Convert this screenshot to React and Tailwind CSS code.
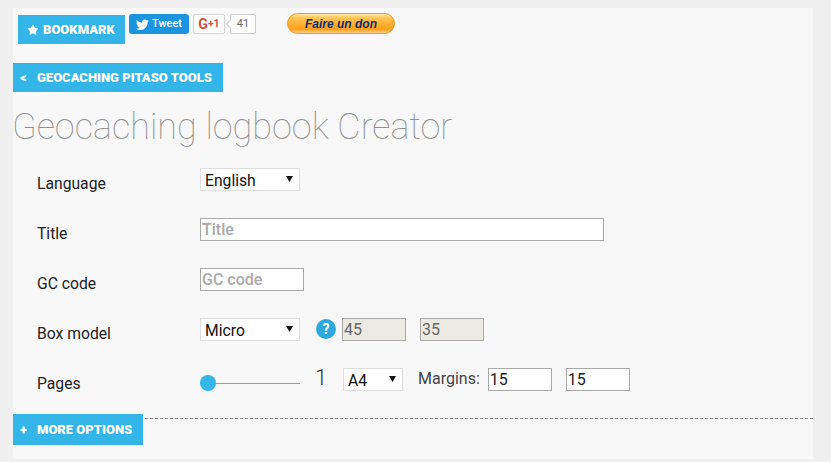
import React from "react";
import { Star } from "lucide-react";

const roboto = "font-['Roboto',sans-serif]";

function Btn({ className, children }) {
  return (
    <a className={`flex items-center bg-[#33b5e8] text-white font-black text-[13px] uppercase ${className}`}>
      {children}
    </a>
  );
}

function Select({ value, options, className }) {
  return (
    <div className={`relative ${className}`}>
      <select
        defaultValue={value}
        className="appearance-none w-full h-[23px] pl-[4px] bg-white border border-[#dedede] text-[15.7px] text-[#111] font-['Roboto',sans-serif] outline-none"
      >
        {options.map((o) => (
          <option key={o}>{o}</option>
        ))}
      </select>
      <svg className="absolute right-[7px] top-[8px] pointer-events-none" width="7" height="6" viewBox="0 0 7 6">
        <path d="M0 0h7L3.5 6z" fill="#111" />
      </svg>
    </div>
  );
}

function Field({ placeholder, value, disabled, className }) {
  return (
    <input
      readOnly
      placeholder={placeholder}
      defaultValue={value}
      disabled={disabled}
      className={`h-[23px] px-[1px] border border-[#a9a9a9] text-[16px] outline-none placeholder:text-[#aaa] placeholder:font-medium ${
        disabled ? "bg-[#ebebe4] text-[#666]" : "bg-white text-[#222]"
      } ${className}`}
    />
  );
}

function Row({ label, children }) {
  return (
    <div className="flex h-[50px]">
      <label className="w-[163px] ml-[24px] pt-[12px] text-[15.7px] leading-[20px] text-[#222]">{label}</label>
      <div className="flex items-start">{children}</div>
    </div>
  );
}

export default function App() {
  return (
    <div className={`w-[831px] h-[462px] overflow-hidden bg-[#f0f0f0] pt-[8px] pl-[13px] ${roboto}`}>
      <div className="w-[800px] h-[451px] bg-[#f8f8f8]">
        <div className="flex items-start h-[55px] pl-[5px] pt-[5px]">
          <Btn className="mt-[2px] w-[107px] h-[29px] pl-[9px] gap-[4px]">
            <Star size={12} fill="white" strokeWidth={1} />
            Bookmark
          </Btn>
          <a className="ml-[4px] mt-[1px] w-[60px] h-[20px] flex items-center gap-[3px] pl-[7px] rounded-[3px] bg-[#1b95e0] text-white text-[11px] font-medium">
            <svg width="13" height="13" viewBox="0 0 24 24" fill="white">
              <path d="M23.6 4.9c-.9.4-1.8.7-2.8.8 1-.6 1.8-1.6 2.1-2.7-.9.6-2 1-3.1 1.2A4.9 4.9 0 0 0 11.500 8.700 13.900 13.900 0 0 1 1.600 3.600a4.900 4.900 0 0 0 1.500 6.500c-.8 0-1.600-.2-2.200-.6v.1c0 2.400 1.700 4.400 3.900 4.800-.7.2-1.500.2-2.200.1.600 2 2.400 3.400 4.600 3.400A9.900 9.900 0 0 1 0 19.900a13.900 13.900 0 0 0 7.500 2.200c9 0 14-7.500 14-14v-.6c1-.7 1.800-1.600 2.100-2.600z" />
            </svg>
            Tweet
          </a>
          <a className="ml-[4px] mt-[1px] w-[32px] h-[20px] flex items-center justify-center bg-white border border-[#d5d5d5] rounded-[2px] text-[#dc4e41] font-bold">
            <span className="text-[14px] leading-none">G</span>
            <span className="text-[10.5px] leading-none">+1</span>
          </a>
          <div className="relative ml-[5px] mt-[1px] w-[26px] h-[20px] flex items-center justify-center bg-white border border-[#ccc] rounded-[2px] text-[#666] text-[11px]">
            <span className="absolute left-[-4px] top-[6px] w-[6px] h-[6px] bg-white border-l border-b border-[#ccc] rotate-45" />
            41
          </div>
          <a className="ml-[31px] w-[108px] h-[21px] flex items-center justify-center rounded-full border border-[#f7941d] bg-[linear-gradient(#ffe9a8_0%,#ffc65a_20%,#ffaa2a_60%,#ff9f1a_80%,#ffd08a_100%)] text-[#0d2f66] text-[12px] font-bold italic font-['Liberation_Sans',sans-serif]">
            Faire un don
          </a>
        </div>

        <Btn className="w-[210px] h-[29px] pl-[7px]">
          <span className="w-[17px]">&lt;</span>
          Geocaching Pitaso Tools
        </Btn>

        <h1 className="mt-[11px] -ml-[1px] text-[36px] leading-[48px] font-thin text-[#8f8f8f]">Geocaching logbook Creator</h1>

        <div className="mt-[11px]">
          <Row label="Language">
            <Select value="English" options={["English", "Français"]} className="w-[100px] mt-[6px]" />
          </Row>
          <Row label="Title">
            <Field placeholder="Title" className="w-[404px] mt-[6px]" />
          </Row>
          <Row label="GC code">
            <Field placeholder="GC code" className="w-[104px] mt-[6px]" />
          </Row>
          <Row label="Box model">
            <Select value="Micro" options={["Micro", "Small"]} className="w-[100px] mt-[6px]" />
            <span className="ml-[16px] mt-[7px] w-[20px] h-[20px] rounded-full bg-[#2fa8de] text-white text-[14px] font-bold flex items-center justify-center">
              ?
            </span>
            <Field value="45" disabled className="ml-[6px] w-[64px] mt-[6px]" />
            <Field value="35" disabled className="ml-[14px] w-[64px] mt-[6px]" />
          </Row>
          <Row label="Pages">
            <div className="relative w-[100px] h-[16px] mt-[13px] flex items-center">
              <div className="w-full h-[1px] bg-[#56b4dc]" />
              <span className="absolute left-0 top-0 w-[16px] h-[16px] rounded-full bg-[#33b5e8]" />
            </div>
            <span className="ml-[15px] w-[28px] mt-[4px] text-[22px] leading-[24px] font-light text-[#333]">1</span>
            <Select value="A4" options={["A4", "A3"]} className="w-[60px] mt-[6px]" />
            <span className="ml-[15px] mt-[7px] text-[16px] leading-[20px] text-[#444]">Margins:</span>
            <Field value="15" className="ml-[8px] w-[64px] mt-[6px]" />
            <Field value="15" className="ml-[14px] w-[64px] mt-[6px]" />
          </Row>
        </div>

        <div className="flex items-start mt-[2px]">
          <Btn className="w-[130px] h-[31px] pl-[7px] pt-[1px]">
            <span className="w-[17px]">+</span>
            More options
          </Btn>
          <div className="flex-1 mt-[4px] ml-[2px] border-t border-dashed border-[#888]" />
        </div>
      </div>
    </div>
  );
}
